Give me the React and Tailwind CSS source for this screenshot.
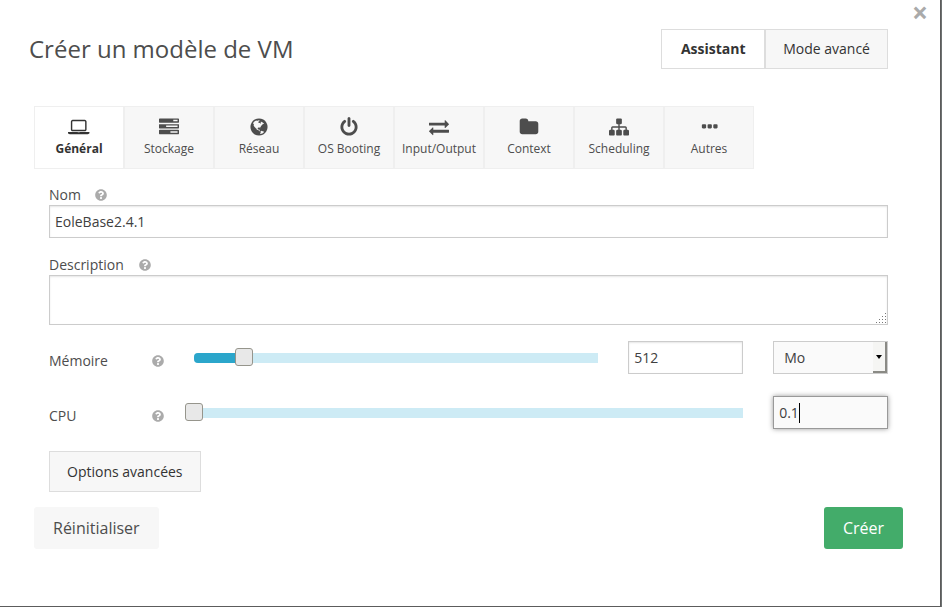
import { useState } from 'react';
import { FaQuestionCircle } from 'react-icons/fa';
import clsx from 'clsx';

function Glyph({ d, width = 1792 }) {
  return (
    <svg viewBox={`0 0 ${width} 1792`} className="h-5 w-auto fill-current" aria-hidden="true">
      <path d={d} />
    </svg>
  );
}

const LAPTOP = 'M416 1280q-66 0-113-47t-47-113v-704q0-66 47-113t113-47h1088q66 0 113 47t47 113v704q0 66-47 113t-113 47h-1088zm-32-864v704q0 13 9.5 22.5t22.5 9.5h1088q13 0 22.5-9.5t9.5-22.5v-704q0-13-9.5-22.5t-22.5-9.5h-1088q-13 0-22.5 9.5t-9.5 22.5zm1376 928h160v96q0 40-47 68t-113 28h-1600q-66 0-113-28t-47-68v-96h1760zm-720 96q16 0 16-16t-16-16h-160q-16 0-16 16t16 16h160z';
const TASKS = 'M1024 1408h640v-128h-640v128zm-384-512h1024v-128h-1024v128zm640-512h384v-128h-384v128zm512 832v256q0 26-19 45t-45 19h-1664q-26 0-45-19t-19-45v-256q0-26 19-45t45-19h1664q26 0 45 19t19 45zm0-512v256q0 26-19 45t-45 19h-1664q-26 0-45-19t-19-45v-256q0-26 19-45t45-19h1664q26 0 45 19t19 45zm0-512v256q0 26-19 45t-45 19h-1664q-26 0-45-19t-19-45v-256q0-26 19-45t45-19h1664q26 0 45 19t19 45z';
const GLOBE = 'M896 128q209 0 385.5 103t279.5 279.5 103 385.5-103 385.5-279.5 279.5-385.5 103-385.5-103-279.5-279.5-103-385.5 103-385.5 279.5-279.5 385.5-103zm274 521q-2 1-9.5 9.5t-13.5 9.5q2 0 4.5-5t5-11 3.5-7q6-7 22-15 14-6 52-12 34-8 51 11-2-2 9.5-13t14.5-12q3-2 15-4.5t15-7.5l2-22q-12 1-17.5-7t-6.5-21q0 2-6 8 0-7-4.5-8t-11.5 1-9 1q-10-3-15-7.5t-8-16.5-4-15q-2-5-9.5-11t-9.5-10q-1-2-2.5-5.5t-3-6.5-4-5.5-5.5-2.5-7 5-7.5 10-4.5 5q-3-2-6-1.5t-4.5 1-4.5 3-5 3.5q-3 2-8.5 3t-8.5 2q15-5-1-11-10-4-16-3 9-4 7.5-12t-8.5-14h5q-1-4-8.5-8.5t-17.5-8.5-13-6q-8-5-34-9.5t-33-.5q-5 6-4.5 10.5t4 14 3.5 12.5q1 6-5.5 13t-6.5 12q0 7 14 15.5t10 21.5q-3 8-16 16t-16 12q-5 8-1.5 18.5t10.5 16.5q2 2 1.5 4t-3.5 4.5-5.5 4-6.5 3.5l-3 2q-11 5-20.5-6t-13.5-26q-7-25-16-30-23-8-29 1-5-13-41-26-25-9-58-4 6-1 0-15-7-15-19-12 3-6 4-17.5t1-13.5q3-13 12-23 1-1 7-8.5t9.5-13.5.5-6q35 4 50-11 5-5 11.5-17t10.5-17q9-6 14-5.5t14.5 5.5 14.5 5q14 1 15.5-11t-7.5-20q12 1 3-17-4-7-8-9-12-4-27 5-8 4 2 8-1-1-9.5 10.5t-16.5 17.5-16-5q-1-1-5.5-13.5t-9.5-13.5q-8 0-16 15 3-8-11-15t-24-8q19-12-8-27-7-4-20.5-5t-19.5 4q-5 7-5.5 11.5t5 8 10.5 5.5 11.5 4 8.5 3q14 10 8 14-2 1-8.5 3.5t-11.5 4.5-6 4q-3 4 0 14t-2 14q-5-5-9-17.5t-7-16.5q7 9-25 6l-10-1q-4 0-16 2t-20.5 1-13.5-8q-4-8 0-20 1-4 4-2-4-3-11-9.5t-10-8.5q-46 15-94 41 6 1 12-1 5-2 13-6.5t10-5.5q34-14 42-7l5-5q14 16 20 25-7-4-30-1-20 6-22 12 7 12 5 18-4-3-11.5-10t-14.5-11-15-5q-16 0-22 1-146 80-235 222 7 7 12 8 4 1 5 9t2.5 11 11.5-3q9 8 3 19 1-1 44 27 19 17 21 21 3 11-10 18-1-2-9-9t-9-4q-3 5 .5 18.5t10.5 12.5q-7 0-9.5 16t-2.5 35.5-1 23.5l2 1q-3 12 5.5 34.5t21.5 19.5q-13 3 20 43 6 8 8 9 3 2 12 7.5t15 10 10 10.5q4 5 10 22.5t14 23.5q-2 6 9.5 20t10.5 23q-1 0-2.5 1t-2.5 1q3 7 15.5 14t15.5 13q1 3 2 10t3 11 8 2q2-20-24-62-15-25-17-29-3-5-5.5-15.5t-4.5-14.5q2 0 6 1.5t8.5 3.5 7.5 4 2 3q-3 7 2 17.5t12 18.5 17 19 12 13q6 6 14 19.5t0 13.5q9 0 20 10.5t17 19.5q5 8 8 26t5 24q2 7 8.5 13.5t12.5 9.5l16 8 13 7q5 2 18.5 10.5t21.5 11.5q10 4 16 4t14.5-2.5 13.5-3.5q15-2 29 15t21 21q36 19 55 11-2 1 .5 7.5t8 15.5 9 14.5 5.5 8.5q5 6 18 15t18 15q6-4 7-9-3 8 7 20t18 10q14-3 14-32-31 15-49-18 0-1-2.5-5.5t-4-8.5-2.5-8.5 0-7.5 5-3q9 0 10-3.5t-2-12.5-4-13q-1-8-11-20t-12-15q-5 9-16 8t-16-9q0 1-1.5 5.5t-1.5 6.5q-13 0-15-1 1-3 2.5-17.5t3.5-22.5q1-4 5.5-12t7.5-14.5 4-12.5-4.5-9.5-17.5-2.5q-19 1-26 20-1 3-3 10.5t-5 11.5-9 7q-7 3-24 2t-24-5q-13-8-22.5-29t-9.5-37q0-10 2.5-26.5t3-25-5.5-24.5q3-2 9-9.5t10-10.5q2-1 4.5-1.5t4.5 0 4-1.5 3-6q-1-1-4-3-3-3-4-3 7 3 28.5-1.5t27.5 1.5q15 11 22-2 0-1-2.5-9.5t-.5-13.5q5 27 29 9 3 3 15.5 5t17.5 5q3 2 7 5.5t5.5 4.5 5-.5 8.5-6.5q10 14 12 24 11 40 19 44 7 3 11 2t4.5-9.5 0-14-1.5-12.5l-1-8v-18l-1-8q-15-3-18.5-12t1.5-18.5 15-18.5q1-1 8-3.5t15.5-6.5 12.5-8q21-19 15-35 7 0 11-9-1 0-5-3t-7.5-5-4.5-2q9-5 2-16 5-3 7.5-11t7.5-10q9 12 21 2 8-8 1-16 5-7 20.5-10.5t18.5-9.5q7 2 8-2t1-12 3-12q4-5 15-9t13-5l17-11q3-4 0-4 18 2 31-11 10-11-6-20 3-6-3-9.5t-15-5.5q3-1 11.5-.5t10.5-1.5q15-10-7-16-17-5-43 12zm-163 877q206-36 351-189-3-3-12.5-4.5t-12.5-3.5q-18-7-24-8 1-7-2.5-13t-8-9-12.5-8-11-7q-2-2-7-6t-7-5.5-7.5-4.5-8.5-2-10 1l-3 1q-3 1-5.5 2.5t-5.5 3-4 3 0 2.5q-21-17-36-22-5-1-11-5.5t-10.5-7-10-1.5-11.5 7q-5 5-6 15t-2 13q-7-5 0-17.5t2-18.5q-3-6-10.5-4.5t-12 4.5-11.5 8.5-9 6.5-8.5 5.5-8.5 7.5q-3 4-6 12t-5 11q-2-4-11.5-6.5t-9.5-5.5q2 10 4 35t5 38q7 31-12 48-27 25-29 40-4 22 12 26 0 7-8 20.5t-7 21.5q0 6 2 16z';
const POWER = 'M1664 896q0 156-61 298t-164 245-245 164-298 61-298-61-245-164-164-245-61-298q0-182 80.5-343t226.5-270q43-32 95.5-25t83.5 50q32 42 24.5 94.5t-49.5 84.5q-98 74-151.5 181t-53.5 228q0 104 40.5 198.5t109.5 163.5 163.5 109.5 198.5 40.5 198.5-40.5 163.5-109.5 109.5-163.5 40.5-198.5q0-121-53.5-228t-151.5-181q-42-32-49.5-84.5t24.5-94.5q31-43 84-50t95 25q146 109 226.5 270t80.5 343zm-640-768v640q0 52-38 90t-90 38-90-38-38-90v-640q0-52 38-90t90-38 90 38 38 90z';
const EXCHANGE = 'M1792 1184v192q0 13-9.5 22.5t-22.5 9.5h-1376v192q0 13-9.5 22.5t-22.5 9.5q-12 0-24-10l-319-320q-9-9-9-22 0-14 9-23l320-320q9-9 23-9 13 0 22.5 9.5t9.5 22.5v192h1376q13 0 22.5 9.5t9.5 22.5zm0-544q0 14-9 23l-320 320q-9 9-23 9-13 0-22.5-9.5t-9.5-22.5v-192h-1376q-13 0-22.5-9.5t-9.5-22.5v-192q0-13 9.5-22.5t22.5-9.5h1376v-192q0-14 9-23t23-9q12 0 24 10l319 319q9 9 9 23z';
const FOLDER = 'M1728 608v704q0 92-66 158t-158 66h-1216q-92 0-158-66t-66-158v-960q0-92 66-158t158-66h320q92 0 158 66t66 158v32h672q92 0 158 66t66 158z';
const SITEMAP = 'M1792 1248v320q0 40-28 68t-68 28h-320q-40 0-68-28t-28-68v-320q0-40 28-68t68-28h96v-192h-512v192h96q40 0 68 28t28 68v320q0 40-28 68t-68 28h-320q-40 0-68-28t-28-68v-320q0-40 28-68t68-28h96v-192h-512v192h96q40 0 68 28t28 68v320q0 40-28 68t-68 28h-320q-40 0-68-28t-28-68v-320q0-40 28-68t68-28h96v-192q0-52 38-90t90-38h512v-192h-96q-40 0-68-28t-28-68v-320q0-40 28-68t68-28h320q40 0 68 28t28 68v320q0 40-28 68t-68 28h-96v192h512q52 0 90 38t38 90v192h96q40 0 68 28t28 68z';
const DOTS = 'M640 736v192q0 40-28 68t-68 28h-192q-40 0-68-28t-28-68v-192q0-40 28-68t68-28h192q40 0 68 28t28 68zm512 0v192q0 40-28 68t-68 28h-192q-40 0-68-28t-28-68v-192q0-40 28-68t68-28h192q40 0 68 28t28 68zm512 0v192q0 40-28 68t-68 28h-192q-40 0-68-28t-28-68v-192q0-40 28-68t68-28h192q40 0 68 28t28 68z';

const tabs = [
  { label: 'Général', icon: <Glyph d={LAPTOP} width={1920} /> },
  { label: 'Stockage', icon: <Glyph d={TASKS} /> },
  { label: 'Réseau', icon: <Glyph d={GLOBE} /> },
  { label: 'OS Booting', icon: <Glyph d={POWER} /> },
  { label: 'Input/Output', icon: <Glyph d={EXCHANGE} /> },
  { label: 'Context', icon: <Glyph d={FOLDER} /> },
  { label: 'Scheduling', icon: <Glyph d={SITEMAP} /> },
  { label: 'Autres', icon: <Glyph d={DOTS} /> },
];

const modes = [
  { id: 'wizard', label: 'Assistant' },
  { id: 'advanced', label: 'Mode avancé' },
];

const field = 'block w-full border border-[#cccccc] bg-white px-[5px] text-sm text-[#404040] shadow-[inset_0_1px_2px_rgba(0,0,0,0.1)] focus:outline-none';

function Help() {
  return <FaQuestionCircle className="size-3 shrink-0 text-[#ababab]" />;
}

function Slider({ id, label, value, max, onChange }) {
  return (
    <div className="relative h-[18px] pt-[5px]">
      <div className="h-[10px] overflow-hidden rounded-l bg-[#cdebf5]">
        <div className="h-full bg-[#2ba6cb]" style={{ width: `${(value / max) * 100}%` }} />
      </div>
      {/* the input is wider than the bar by half a handle on each side */}
      <input
        id={id}
        type="range"
        aria-label={label}
        min="0"
        max={max}
        step="any"
        value={value}
        onChange={(e) => onChange(Number(e.target.value))}
        className="absolute -left-[9px] top-0 h-[18px] w-[calc(100%+18px)] cursor-pointer appearance-none bg-transparent focus:outline-none [&::-webkit-slider-thumb]:size-[18px] [&::-webkit-slider-thumb]:appearance-none [&::-webkit-slider-thumb]:rounded-[3px] [&::-webkit-slider-thumb]:border [&::-webkit-slider-thumb]:border-[#96958c] [&::-webkit-slider-thumb]:bg-[#e8e8e8]"
      />
    </div>
  );
}

function App() {
  const [mode, setMode] = useState('wizard');
  const [tab, setTab] = useState('Général');
  const [name, setName] = useState('EoleBase2.4.1');
  const [memory, setMemory] = useState(512);
  const [cpu, setCpu] = useState('0.1');

  return (
    <div className="min-h-screen bg-[#6f7373] pr-px font-['Open_Sans',sans-serif] text-[#4d4d4d]">
      <div className="relative min-h-screen border-r border-b border-[#5c5c5c] bg-white pt-[29px] pr-[37px] pl-[34px]">
        <button type="button" aria-label="Fermer" className="absolute -top-2 right-3 text-[28px] leading-10 font-bold text-[#aaaaaa]">
          ×
        </button>

        <header className="-ml-[5px] flex items-start justify-between pr-[15px]">
          <h1 className="text-2xl leading-10">Créer un modèle de VM</h1>
          <div className="flex text-sm text-[#333333]">
            {modes.map(({ id, label }) => (
              <button
                key={id}
                type="button"
                onClick={() => setMode(id)}
                className={clsx(
                  'h-10 min-w-[104px] border border-[#dddddd] px-[17px]',
                  mode === id ? 'bg-white font-bold' : 'bg-[#f7f7f7]',
                )}
              >
                {label}
              </button>
            ))}
          </div>
        </header>

        <form onSubmit={(e) => e.preventDefault()}>
          <nav className="mt-[37px] flex">
            {tabs.map(({ label, icon }) => (
              <button
                key={label}
                type="button"
                onClick={() => setTab(label)}
                className={clsx(
                  'flex h-[63px] w-[90px] flex-col items-center border border-[#efefef] pt-[10px] text-xs whitespace-nowrap',
                  tab === label ? 'bg-white font-bold text-[#333333]' : 'bg-[#f7f7f7]',
                )}
              >
                {icon}
                <span className="leading-6">{label}</span>
              </button>
            ))}
          </nav>

          <div className="px-[15px] pt-4">
            <label htmlFor="name" className="flex h-5 items-center gap-[14px] text-sm">
              Nom <Help />
            </label>
            <input id="name" type="text" value={name} onChange={(e) => setName(e.target.value)} className={clsx(field, 'h-[33px]')} />

            <label htmlFor="description" className="mt-[17px] flex h-5 items-center gap-[15px] text-sm">
              Description <Help />
            </label>
            <div className="relative">
              <textarea id="description" className={clsx(field, 'h-[50px] resize-y [&::-webkit-resizer]:bg-transparent')} />
              {/* resize grip */}
              <svg viewBox="0 0 10 10" className="pointer-events-none absolute right-[2px] bottom-[2px] size-[10px] fill-[#777777]" shapeRendering="crispEdges">
                <path d="M9 0h1v1h-1zM6 3h1v1h-1zM9 3h1v1h-1zM3 6h1v1h-1zM6 6h1v1h-1zM9 6h1v1h-1zM0 9h1v1h-1zM3 9h1v1h-1zM6 9h1v1h-1zM9 9h1v1h-1z" />
              </svg>
            </div>

            <div className="mt-4 grid grid-cols-12 gap-x-[30px]">
              <label htmlFor="memory" className="col-span-2 flex h-10 items-center justify-between text-sm">
                Mémoire <Help />
              </label>
              <div className="col-span-6 pt-[7px]">
                <Slider id="memory-slider" label="Mémoire" value={memory} max={4096} onChange={(v) => setMemory(Math.round(v))} />
              </div>
              <div className="col-span-2">
                <input id="memory" type="text" value={memory} onChange={(e) => setMemory(Number(e.target.value) || 0)} className={clsx(field, 'h-[33px]')} />
              </div>
              <div className="relative col-span-2">
                <select aria-label="Unité" className="block h-[33px] w-full appearance-none border border-[#cccccc] bg-[#fafafa] px-[10px] text-sm text-[#404040] focus:outline-none">
                  <option>Mo</option>
                  <option>Go</option>
                </select>
                <span className="pointer-events-none absolute top-px right-px flex h-[31px] w-[14px] items-center justify-center border-r-2 border-b-2 border-[#8a8a85] bg-[#f5f5f3]">
                  <svg viewBox="0 0 6 4" className="h-1 w-1.5">
                    <path d="M0 0h6L3 4z" />
                  </svg>
                </span>
              </div>
            </div>

            <div className="mt-[15px] grid grid-cols-12 gap-x-[30px]">
              <label htmlFor="cpu" className="col-span-2 flex h-10 items-center justify-between text-sm">
                CPU <Help />
              </label>
              <div className="col-span-8 pt-[7px]">
                <Slider id="cpu-slider" label="CPU" value={0} max={16} onChange={(v) => setCpu(v.toFixed(1))} />
              </div>
              <div className="col-span-2">
                <div className="relative">
                  <input
                    id="cpu"
                    type="text"
                    value={cpu}
                    onChange={(e) => setCpu(e.target.value)}
                    className="block h-[33px] w-full border border-[#999999] bg-[#fafafa] px-[5px] text-sm text-[#404040] shadow-[0_0_5px_#999999] focus:outline-none"
                  />
                  <span className="pointer-events-none absolute top-[7px] left-[26px] h-5 w-px bg-black" />
                </div>
              </div>
            </div>

            <button type="button" className="mt-[15px] h-[41px] border border-[#dddddd] bg-[#f7f7f7] px-[17px] text-sm text-[#333333]">
              Options avancées
            </button>
          </div>

          <div className="mt-[15px] flex justify-between text-base">
            <button type="reset" className="h-[42px] rounded-[3px] bg-[#f7f7f7] px-[19px] text-[#4d4d4d]">
              Réinitialiser
            </button>
            <button type="submit" className="h-[42px] rounded-[3px] bg-[#43ac6a] px-[19px] text-white">
              Créer
            </button>
          </div>
        </form>
      </div>
    </div>
  );
}

export default App;
